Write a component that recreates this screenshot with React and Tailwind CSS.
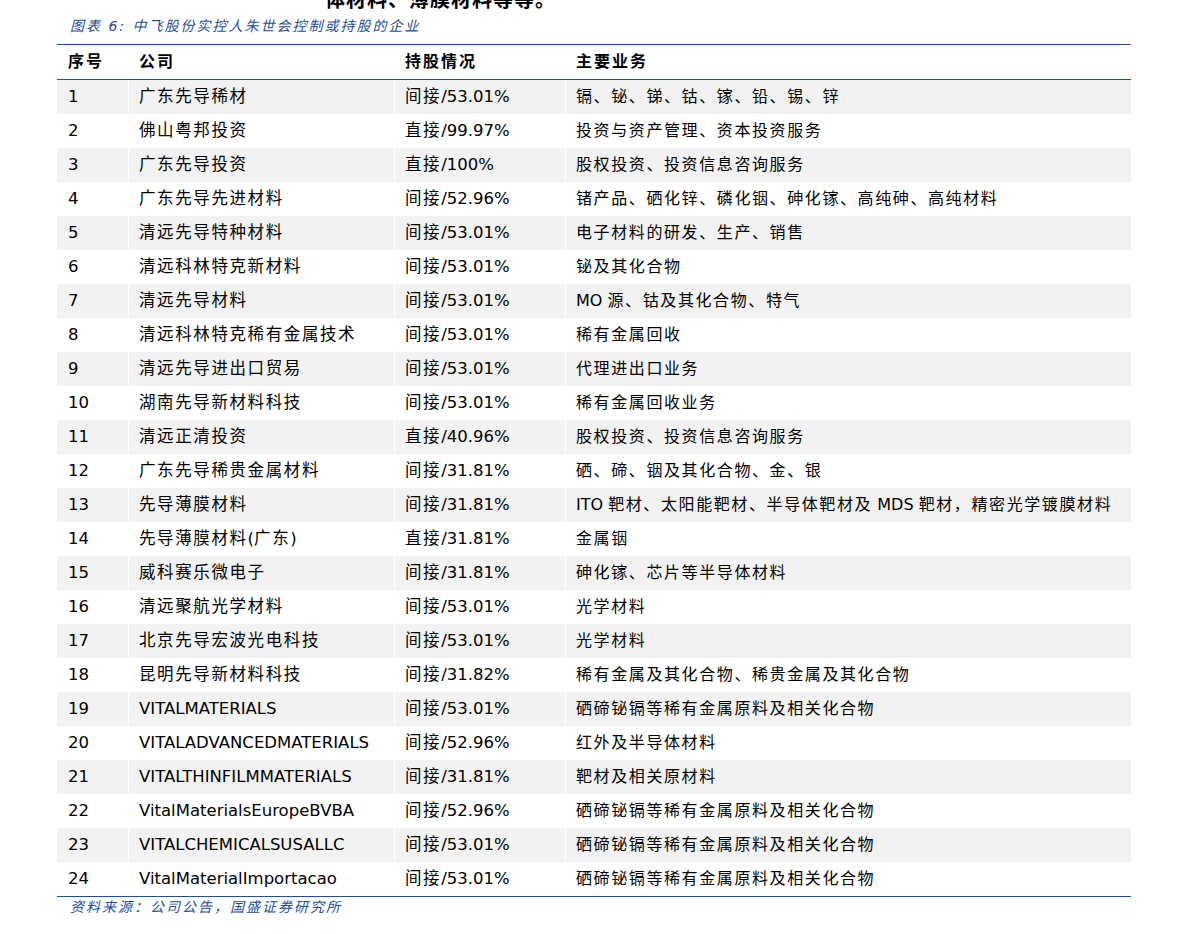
const rows = [
["1","广东先导稀材","间接/53.01%","镉、铋、锑、钴、镓、铅、锡、锌"],
["2","佛山粤邦投资","直接/99.97%","投资与资产管理、资本投资服务"],
["3","广东先导投资","直接/100%","股权投资、投资信息咨询服务"],
["4","广东先导先进材料","间接/52.96%","锗产品、硒化锌、磷化铟、砷化镓、高纯砷、高纯材料"],
["5","清远先导特种材料","间接/53.01%","电子材料的研发、生产、销售"],
["6","清远科林特克新材料","间接/53.01%","铋及其化合物"],
["7","清远先导材料","间接/53.01%","MO 源、钴及其化合物、特气"],
["8","清远科林特克稀有金属技术","间接/53.01%","稀有金属回收"],
["9","清远先导进出口贸易","间接/53.01%","代理进出口业务"],
["10","湖南先导新材料科技","间接/53.01%","稀有金属回收业务"],
["11","清远正清投资","直接/40.96%","股权投资、投资信息咨询服务"],
["12","广东先导稀贵金属材料","间接/31.81%","硒、碲、铟及其化合物、金、银"],
["13","先导薄膜材料","间接/31.81%","ITO 靶材、太阳能靶材、半导体靶材及 MDS 靶材，精密光学镀膜材料"],
["14","先导薄膜材料(广东)","直接/31.81%","金属铟"],
["15","威科赛乐微电子","间接/31.81%","砷化镓、芯片等半导体材料"],
["16","清远聚航光学材料","间接/53.01%","光学材料"],
["17","北京先导宏波光电科技","间接/53.01%","光学材料"],
["18","昆明先导新材料科技","间接/31.82%","稀有金属及其化合物、稀贵金属及其化合物"],
["19","VITALMATERIALS","间接/53.01%","硒碲铋镉等稀有金属原料及相关化合物"],
["20","VITALADVANCEDMATERIALS","间接/52.96%","红外及半导体材料"],
["21","VITALTHINFILMMATERIALS","间接/31.81%","靶材及相关原材料"],
["22","VitalMaterialsEuropeBVBA","间接/52.96%","硒碲铋镉等稀有金属原料及相关化合物"],
["23","VITALCHEMICALSUSALLC","间接/53.01%","硒碲铋镉等稀有金属原料及相关化合物"],
["24","VitalMaterialImportacao","间接/53.01%","硒碲铋镉等稀有金属原料及相关化合物"],
];
const font = {fontFamily:'"DejaVu Sans","Noto Sans CJK SC",sans-serif'};
function T({s}){
  const parts = s.split(/([\u3000-\u9fff\uff00-\uffef]+)/);
  return <>{parts.map((p,i)=> /[\u3000-\u9fff\uff00-\uffef]/.test(p)
    ? <span key={i} className="tracking-[1.6px]">{p}</span> : <span key={i}>{p}</span>)}</>;
}
export default function App(){
  return (
    <div className="w-[1191px] h-[934px] bg-white overflow-hidden text-black" style={font}>
      <div className="h-[12px] overflow-hidden relative">
        <div className="absolute left-[325px] top-[-12px] text-[20px] font-bold leading-[24px] tracking-[1px]">体材料、薄膜材料等等。</div>
      </div>
      <div className="ml-[70px] h-[32px] text-[14px] italic text-[#1f4e9a] leading-[28px] tracking-[2px]">图表 6:  中飞股份实控人朱世会控制或持股的企业</div>
      <div className="ml-[57px] w-[1074px] border-t border-b border-[#1f4e9a]">
        <div className="flex h-[35px] items-center font-bold text-[16px] border-b border-[#1f4e9a] tracking-[2px]">
          <div className="w-[72px] pl-[11px]">序号</div>
          <div className="w-[266px] pl-[10px]">公司</div>
          <div className="w-[171px] pl-[10px]">持股情况</div>
          <div className="flex-1 pl-[10px]">主要业务</div>
        </div>
        {rows.map((r,i)=>(
          <div key={i} className={"flex h-[34px] items-center text-[16.5px] "+(i%2===0?"bg-[#f2f2f2]":"")}>
            <div className="w-[72px] pl-[11px] h-full flex items-center border-r border-white">{r[0]}</div>
            <div className="w-[266px] pl-[10px] h-full flex items-center border-r border-white whitespace-nowrap"><span><T s={r[1]}/></span></div>
            <div className="w-[171px] pl-[10px] h-full flex items-center border-r border-white"><span><T s={r[2]}/></span></div>
            <div className="flex-1 pl-[10px] h-full flex items-center whitespace-nowrap text-[16px]"><span><T s={r[3]}/></span></div>
          </div>
        ))}
      </div>
      <div className="ml-[70px] text-[14px] italic text-[#1f4e9a] leading-[20px] tracking-[2px]">资料来源：公司公告，国盛证券研究所</div>
    </div>
  );
}
